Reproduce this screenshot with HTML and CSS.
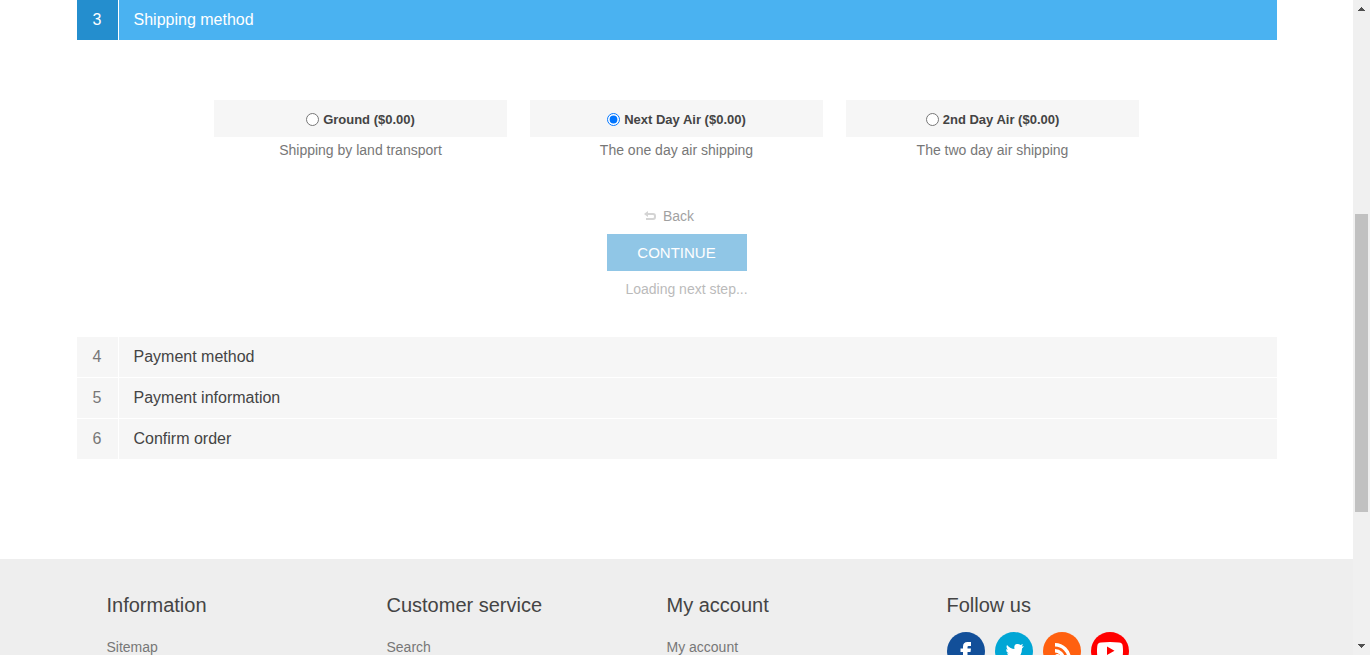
FILE: index.html
```html
<!DOCTYPE html>
<html lang="en">
<head>
<meta charset="utf-8">
<title>Checkout</title>
<link rel="stylesheet" href="styles.css">
</head>
<body>
<div class="window">
  <div class="page">
    <main class="checkout">
      <ol class="steps">
        <li>
          <div class="step-title active"><span class="number">3</span><h2>Shipping method</h2></div>
          <form class="step-body">
            <ul class="methods">
              <li>
                <div class="method-name"><input type="radio" name="shipping" id="ground"><label for="ground">Ground ($0.00)</label></div>
                <p>Shipping by land transport</p>
              </li>
              <li>
                <div class="method-name"><input type="radio" name="shipping" id="next-day" checked><label for="next-day">Next Day Air ($0.00)</label></div>
                <p>The one day air shipping</p>
              </li>
              <li>
                <div class="method-name"><input type="radio" name="shipping" id="second-day"><label for="second-day">2nd Day Air ($0.00)</label></div>
                <p>The two day air shipping</p>
              </li>
            </ul>
            <div class="buttons">
              <a class="back" href="#">
                <svg width="12" height="10" viewBox="0 0 12 10" aria-hidden="true"><path d="M0 3 4 0V2H9Q12 2 12 5V6Q12 9 9 9H2V7H9Q10 7 10 6V5Q10 4 9 4H4V6Z" fill="#aaa"/></svg>
                Back
              </a>
              <button class="continue" type="button">Continue</button>
              <span class="wait">Loading next step...</span>
            </div>
          </form>
        </li>
        <li><div class="step-title"><span class="number">4</span><h2>Payment method</h2></div></li>
        <li><div class="step-title"><span class="number">5</span><h2>Payment information</h2></div></li>
        <li><div class="step-title"><span class="number">6</span><h2>Confirm order</h2></div></li>
      </ol>
    </main>
    <footer class="footer">
      <div class="footer-columns">
        <section><h3>Information</h3><a href="#">Sitemap</a></section>
        <section><h3>Customer service</h3><a href="#">Search</a></section>
        <section><h3>My account</h3><a href="#">My account</a></section>
        <section>
          <h3>Follow us</h3>
          <div class="social">
            <a class="facebook" href="#" aria-label="Facebook"><svg viewBox="0 0 38 38"><path d="M16 30V20H13.500V16.500H16V14.500Q16 10 20.500 10H24V14H21.500Q20.500 14 20.500 15V16.500H24L23.500 20H20.500V30Z"/></svg></a>
            <a class="twitter" href="#" aria-label="Twitter"><svg viewBox="0 0 38 38"><path d="M12 13Q15.500 17 19.500 17Q18.500 12.500 22 12Q24 11.700 25.500 13L28 12L26.800 14.500L29 14.300L27 16.500Q27 26 18 27.500Q13.500 28 10 25.500Q13.500 25.500 15.500 24Q12.700 23.500 12 21.300H13.800Q11 20 11 17.200L12.800 17.700Q10.800 15.500 12 13Z"/></svg></a>
            <a class="rss" href="#" aria-label="RSS"><svg viewBox="0 0 38 38"><circle cx="14.500" cy="24.500" r="2.500"/><path d="M12 11A16 16 0 0 1 28 27H24.500A12.500 12.500 0 0 0 12 14.500ZM12 17A10 10 0 0 1 22 27H18.500A6.500 6.500 0 0 0 12 20.500Z"/></svg></a>
            <a class="youtube" href="#" aria-label="YouTube"><svg viewBox="0 0 38 38"><path fill-rule="evenodd" d="M10 10.500Q19 9.500 28 10.500Q31.500 10.800 31.700 14Q32.300 19 31.700 24Q31.500 27.500 28 27.700Q19 28.500 10 27.700Q6.500 27.500 6.300 24Q5.700 19 6.300 14Q6.500 10.800 10 10.500ZM16 14.500V23L23.500 18.700Z"/></svg></a>
          </div>
        </section>
      </div>
    </footer>
  </div>
  <div class="scrollbar" aria-hidden="true">
    <svg width="17" height="17" viewBox="0 0 17 17"><path d="M8 7H9V8H10V9H11V10H12V11H5V10H6V9H7V8H8Z"/></svg>
    <div class="track"><div class="thumb"></div></div>
    <svg width="17" height="17" viewBox="0 0 17 17"><path d="M5 6H12V7H11V8H10V9H9V10H8V9H7V8H6V7H5Z"/></svg>
  </div>
</div>
</body>
</html>
```
FILE: styles.css
```css
* { box-sizing: border-box; margin: 0; padding: 0; }

body {
  font: 14px/20px "Liberation Sans", Arial, sans-serif;
  color: #777;
  background: #fff;
}

a { color: inherit; text-decoration: none; }
ol, ul { list-style: none; }

.window { display: flex; height: 100vh; overflow: hidden; }
.page { flex: 1; min-width: 0; overflow: hidden; }

.checkout { max-width: 1200px; margin: 0 auto; padding-bottom: 100px; }
.steps { display: flex; flex-direction: column; gap: 1px; }

.step-title {
  display: flex;
  line-height: 40px;
  height: 40px;
  font-size: 16px;
}
.number {
  width: 42px;
  border-right: 1px solid #fff;
  text-align: center;
  background: #f6f6f6;
}
.step-title h2 {
  flex: 1;
  padding-left: 15px;
  font-size: 16px;
  font-weight: normal;
  color: #444;
  background: #f6f6f6;
}
.active .number { color: #fff; background: #248ece; }
.active h2 { color: #fff; background: #4ab2f1; }

.step-body { padding: 60px 0 37px; }
.methods { display: flex; justify-content: center; gap: 23px; }
.methods li { width: 293px; text-align: center; }
.method-name {
  display: flex;
  align-items: center;
  justify-content: center;
  gap: 4px;
  height: 37px;
  padding-top: 2px;
  font-size: 13px;
  font-weight: bold;
  color: #444;
  background: #f6f6f6;
}
.method-name input { width: 13px; height: 13px; }
.methods p { padding-top: 3px; }

.buttons {
  display: flex;
  flex-direction: column;
  align-items: center;
  padding-top: 46px;
  opacity: 0.5;
}
.back {
  display: flex;
  align-items: center;
  gap: 7px;
  padding-right: 15px;
  color: #444;
}
.continue {
  min-width: 140px;
  height: 37px;
  margin: 8px 0;
  border: 0;
  font: 15px "Liberation Sans", Arial, sans-serif;
  text-transform: uppercase;
  color: #fff;
  background: #248ece;
}
.wait { padding-left: 20px; }

.footer { height: 300px; padding-top: 34px; background: #eee; }
.footer-columns {
  display: grid;
  grid-template-columns: repeat(4, 1fr);
  max-width: 1200px;
  margin: 0 auto;
  padding: 0 50px 0 30px;
}
.footer h3 {
  margin-bottom: 15px;
  font-size: 20px;
  line-height: 24px;
  font-weight: normal;
  color: #444;
}
.footer section > a { display: block; padding-top: 5px; }
.social { display: flex; gap: 10px; }
.social a { width: 38px; height: 38px; border-radius: 50%; overflow: hidden; }
.social svg { display: block; fill: #fff; }
.facebook { background: #124f99; }
.twitter { background: #00a6d5; }
.rss { background: #ff600f; }
.youtube { background: #f00; }

.scrollbar {
  display: flex;
  flex-direction: column;
  width: 17px;
  background: #f0f0f0;
}
.scrollbar svg { fill: #505050; }
.track { flex: 1; padding: 0 2px; }
.track::before { content: ""; display: block; height: 31.7%; }
.thumb { height: 48%; background: #c1c1c1; }
```
